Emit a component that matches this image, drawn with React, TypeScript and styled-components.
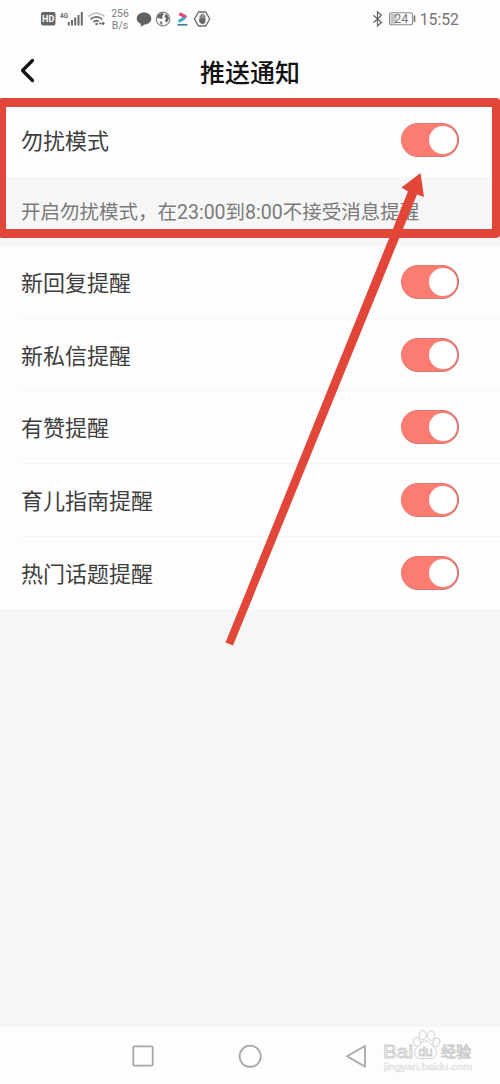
import React from 'react';
import styled, { createGlobalStyle } from 'styled-components';

const GlobalStyle = createGlobalStyle`
  * { box-sizing: border-box; }
  body {
    margin: 0;
    background: #fdfdfd;
    font-family: Roboto, "Noto Sans CJK SC", sans-serif;
  }
`;

const Screen = styled.div`
  position: relative;
  display: flex;
  flex-direction: column;
  width: 500px;
  height: 1084px;
  overflow: hidden;
  background: #f6f6f6;
`;

const StatusBar = styled.header`
  display: flex;
  justify-content: space-between;
  align-items: center;
  height: 38px;
  padding: 0 41px 0 40px;
  background: #fdfdfd;
  color: #6b6b6b;
`;

const StatusGroup = styled.div`
  display: flex;
  align-items: center;
`;

const StatusIcons = styled.svg`
  display: block;
  overflow: visible;
`;

const Speed = styled.div`
  width: 24px;
  margin: 1px 2px 0 2px;
  font-size: 10.5px;
  line-height: 12px;
  text-align: center;
  color: #808080;
`;

const Clock = styled.time`
  margin-left: 4px;
  padding-top: 1px;
  font-size: 15.8px;
  line-height: 20px;
  color: #747474;
`;

const TitleBar = styled.div`
  display: grid;
  grid-template-columns: 60px 1fr 60px;
  align-items: center;
  height: 66px;
  background: #fdfdfd;
`;

const BackButton = styled.button`
  display: flex;
  height: 40px;
  padding: 7px 0 0 19px;
  border: 0;
  background: none;
`;

const Title = styled.h1`
  margin: 0;
  font-family: "Noto Sans CJK SC", sans-serif;
  font-size: 25px;
  font-weight: 500;
  line-height: 36px;
  text-align: center;
  color: #111;
`;

const Row = styled.div<{ $height: number }>`
  display: flex;
  align-items: center;
  height: ${(p) => p.$height}px;
  padding-left: 21px;
  background: #fdfdfd;
`;

const RowBody = styled.div<{ $divided?: boolean }>`
  display: flex;
  flex: 1;
  align-items: center;
  justify-content: space-between;
  height: 100%;
  padding-right: 41px;
  border-bottom: 1px solid ${(p) => (p.$divided ? '#f4f4f4' : 'transparent')};
`;

const Label = styled.span`
  padding-bottom: 2px;
  font-family: "Noto Sans CJK SC", sans-serif;
  font-size: 22px;
  line-height: 32px;
  color: #3e3e3e;
`;

const Toggle = styled.button`
  display: flex;
  align-items: center;
  justify-content: flex-end;
  width: 58px;
  height: 34px;
  padding: 0 1px;
  border: 1px solid;
  border-color: #dd7a72 #b5706b #d27a73 #f0796f;
  border-radius: 17px;
  background: #fd7c71;
`;

const Knob = styled.span`
  width: 28px;
  height: 28px;
  border-radius: 50%;
  background: #fff;
`;

const Hint = styled.p`
  height: 69px;
  margin: 0;
  padding: 22px 0 0 21px;
  font-size: 19.5px;
  line-height: 28px;
  white-space: nowrap;
  color: #7a7a7a;
`;

const NavBar = styled.nav`
  display: flex;
  align-items: center;
  height: 57px;
  margin-top: auto;
  background: #fdfdfd;
`;

const NavIcons = styled.svg`
  display: block;
`;

const Highlight = styled.div`
  position: absolute;
  top: 98px;
  left: -3px;
  width: 504px;
  height: 140px;
  border: 9px solid #e14638;
  border-radius: 5px;
`;

const Arrow = styled.svg`
  position: absolute;
  top: 0;
  left: 0;
  pointer-events: none;
`;

const Watermark = styled.svg`
  position: absolute;
  left: 376px;
  top: 1024px;
  font-family: "Liberation Sans", "Noto Sans CJK SC", sans-serif;
`;

const reminders = ['新回复提醒', '新私信提醒', '有赞提醒', '育儿指南提醒', '热门话题提醒'];

function Switch({ label }: { label: string }) {
  return (
    <Toggle role="switch" aria-checked="true" aria-label={label}>
      <Knob />
    </Toggle>
  );
}

function SignalIcons() {
  return (
    <StatusIcons width="66" height="38" viewBox="40 0 66 38">
      <rect x="41" y="12" width="14.5" height="13.5" rx="2" fill="#666" />
      <text x="48.2" y="22.2" fontSize="9" fontWeight="700" textAnchor="middle" fill="#fff">HD</text>
      <text x="60" y="18" fontSize="8" fontWeight="700" textLength="8" lengthAdjust="spacingAndGlyphs" fill="#666">4G</text>
      <path d="M68.8 22v3.5M72 20v5.5M75.2 17.5v8M78.5 15v10.500M81.8 12v13.500" stroke="#6b6b6b" strokeWidth="2" />
      <path d="M88.5 16.500Q96.500 9.500 104.500 16.500" fill="none" stroke="#bbb" strokeWidth="1.500" />
      <path d="M90.500 19.300Q96.500 14.300 102.500 19.300M93.300 22Q96.500 19.500 98.800 21.600" fill="none" stroke="#6b6b6b" strokeWidth="1.600" />
      <circle cx="96.500" cy="24" r="1.200" fill="#666" />
      <path d="M99 23.500h2.500M103 22v3M102 23.500h2.500" stroke="#666" strokeWidth="1.500" />
    </StatusIcons>
  );
}

function AppIcons() {
  return (
    <StatusIcons width="78" height="38" viewBox="134 0 78 38">
      <path d="M144 12.500c4.200 0 7.300 2.600 7.300 6s-3 6-7 6c-1 1-2.500 1.800-4 1.900.6-.8.8-1.700.7-2.500-2.600-1-4.300-3-4.300-5.400 0-3.400 3.100-6 7.300-6z" fill="#626262" />
      <circle cx="163" cy="19" r="6.800" fill="none" stroke="#888" strokeWidth="1.200" />
      <path d="M158.500 14.500l4-2 1.500 2-2 1.500 1 2-2 1-2-1-1.500 1-.3-2.500zM165.500 14l2 1 1.500 3-1 3-2.200 1.500-.8-2.500 1.300-1.500-1.800-1.500zM159.500 21.500l2.500.3.500 2.700-1.500 0z" fill="#666" />
      <path d="M179.300 13.800l5.800 2.700-2.500 1.500" fill="none" stroke="#e44684" strokeWidth="3.400" strokeLinejoin="round" />
      <path d="M185 17.700l-6.500 3.800" stroke="#38a9c8" strokeWidth="3" />
      <path d="M177.500 24.800h10" stroke="#477f91" strokeWidth="1.700" />
      <path d="M198.500 12h7.200l4 7-4 7h-7.200l-4-7z" fill="none" stroke="#6b6b6b" strokeWidth="1.300" />
      <path d="M200.200 20v-4.500M201.700 19v-5M203.200 19v-5M204.700 19.500v-4" fill="none" stroke="#666" strokeWidth="1.100" strokeLinecap="round" />
      <path d="M199.600 18.500h5.700v2.800c0 1.800-1.100 2.700-2.700 2.700-1.800 0-2.400-.8-3.700-3z" fill="#666" />
    </StatusIcons>
  );
}

function PowerIcons() {
  return (
    <StatusIcons width="44" height="38" viewBox="372 0 44 38">
      <path d="M373.500 15.300l8 7.200-4 3.300V12l4 3.300-8 7.200" fill="none" stroke="#6b6b6b" strokeWidth="1.300" />
      <rect x="389.500" y="12.700" width="23" height="12" rx="2" fill="none" stroke="#8b8b8b" strokeWidth="1.100" />
      <rect x="390.500" y="13.700" width="6" height="10" fill="#c4c4c4" />
      <path d="M414.500 15.500v6.500" stroke="#777" strokeWidth="1.700" />
      <text x="401.300" y="23.200" fontSize="12.500" textAnchor="middle" fill="#777">24</text>
    </StatusIcons>
  );
}

export default function App() {
  return (
    <>
      <GlobalStyle />
      <Screen>
        <StatusBar>
          <StatusGroup>
            <SignalIcons />
            <Speed>256<br />B/s</Speed>
            <AppIcons />
          </StatusGroup>
          <StatusGroup>
            <PowerIcons />
            <Clock>15:52</Clock>
          </StatusGroup>
        </StatusBar>
        <TitleBar>
          <BackButton aria-label="返回">
            <svg width="18" height="26" viewBox="0 0 18 26">
              <path d="M13.500 2.500L3.500 12.500l10 10" fill="none" stroke="#111" strokeWidth="3.200" strokeLinecap="round" strokeLinejoin="round" />
            </svg>
          </BackButton>
          <Title>推送通知</Title>
        </TitleBar>
        <Row $height={73}>
          <RowBody>
            <Label>勿扰模式</Label>
            <Switch label="勿扰模式" />
          </RowBody>
        </Row>
        <Hint>开启勿扰模式，在23:00到8:00不接受消息提醒</Hint>
        {reminders.map((name, i) => (
          <Row key={name} $height={72.7}>
            <RowBody $divided={i < reminders.length - 1}>
              <Label>{name}</Label>
              <Switch label={name} />
            </RowBody>
          </Row>
        ))}
        <NavBar>
          <NavIcons width="500" height="57" viewBox="0 1027 500 57" fill="none" stroke="#a8a8a8" strokeWidth="1.800">
            <rect x="133.300" y="1046.300" width="19.400" height="19.400" rx="1" />
            <circle cx="250.200" cy="1056.300" r="10.600" />
            <path d="M347 1056.300l18-10.300v20.600z" strokeLinejoin="round" />
          </NavIcons>
        </NavBar>
        <Highlight />
        <Arrow width="500" height="660" viewBox="0 0 500 660">
          <path d="M225.500 642.500L408 191.500l-6.500-4 19-14.500 3.500 24-7-2.500L233 645.500z" fill="#e14638" />
        </Arrow>
        <Watermark width="120" height="52" viewBox="376 1024 120 52">
          <g fill="#fdfdfd" stroke="#cbcbcb" strokeWidth=".9">
            <text x="383" y="1057.500" fontSize="19" textLength="30" lengthAdjust="spacingAndGlyphs">Bai</text>
            <ellipse cx="417" cy="1042" rx="3.500" ry="4.500" transform="rotate(-20 417 1042)" />
            <ellipse cx="422.800" cy="1035.200" rx="3.500" ry="4.700" />
            <ellipse cx="431" cy="1035.500" rx="3.500" ry="4.700" />
            <ellipse cx="436.300" cy="1042.500" rx="3.300" ry="4.500" transform="rotate(20 436.300 1042.500)" />
            <path d="M426 1041c4 0 5 4 8 6.500 4 3.500 3 11-3 11h-11c-6 0-7-7.500-3-11 3-2.500 5-6.500 9-6.500z" />
            <text x="418.500" y="1056" fontSize="13" textLength="14" lengthAdjust="spacingAndGlyphs">du</text>
            <text x="441" y="1056.500" fontSize="15" textLength="30" lengthAdjust="spacingAndGlyphs">经验</text>
          </g>
          <text x="384" y="1070" fontSize="9.500" textLength="88" lengthAdjust="spacingAndGlyphs" fill="#fdfdfd" stroke="#e0e0e0" strokeWidth=".6">jingyan.baidu.com</text>
        </Watermark>
      </Screen>
    </>
  );
}
